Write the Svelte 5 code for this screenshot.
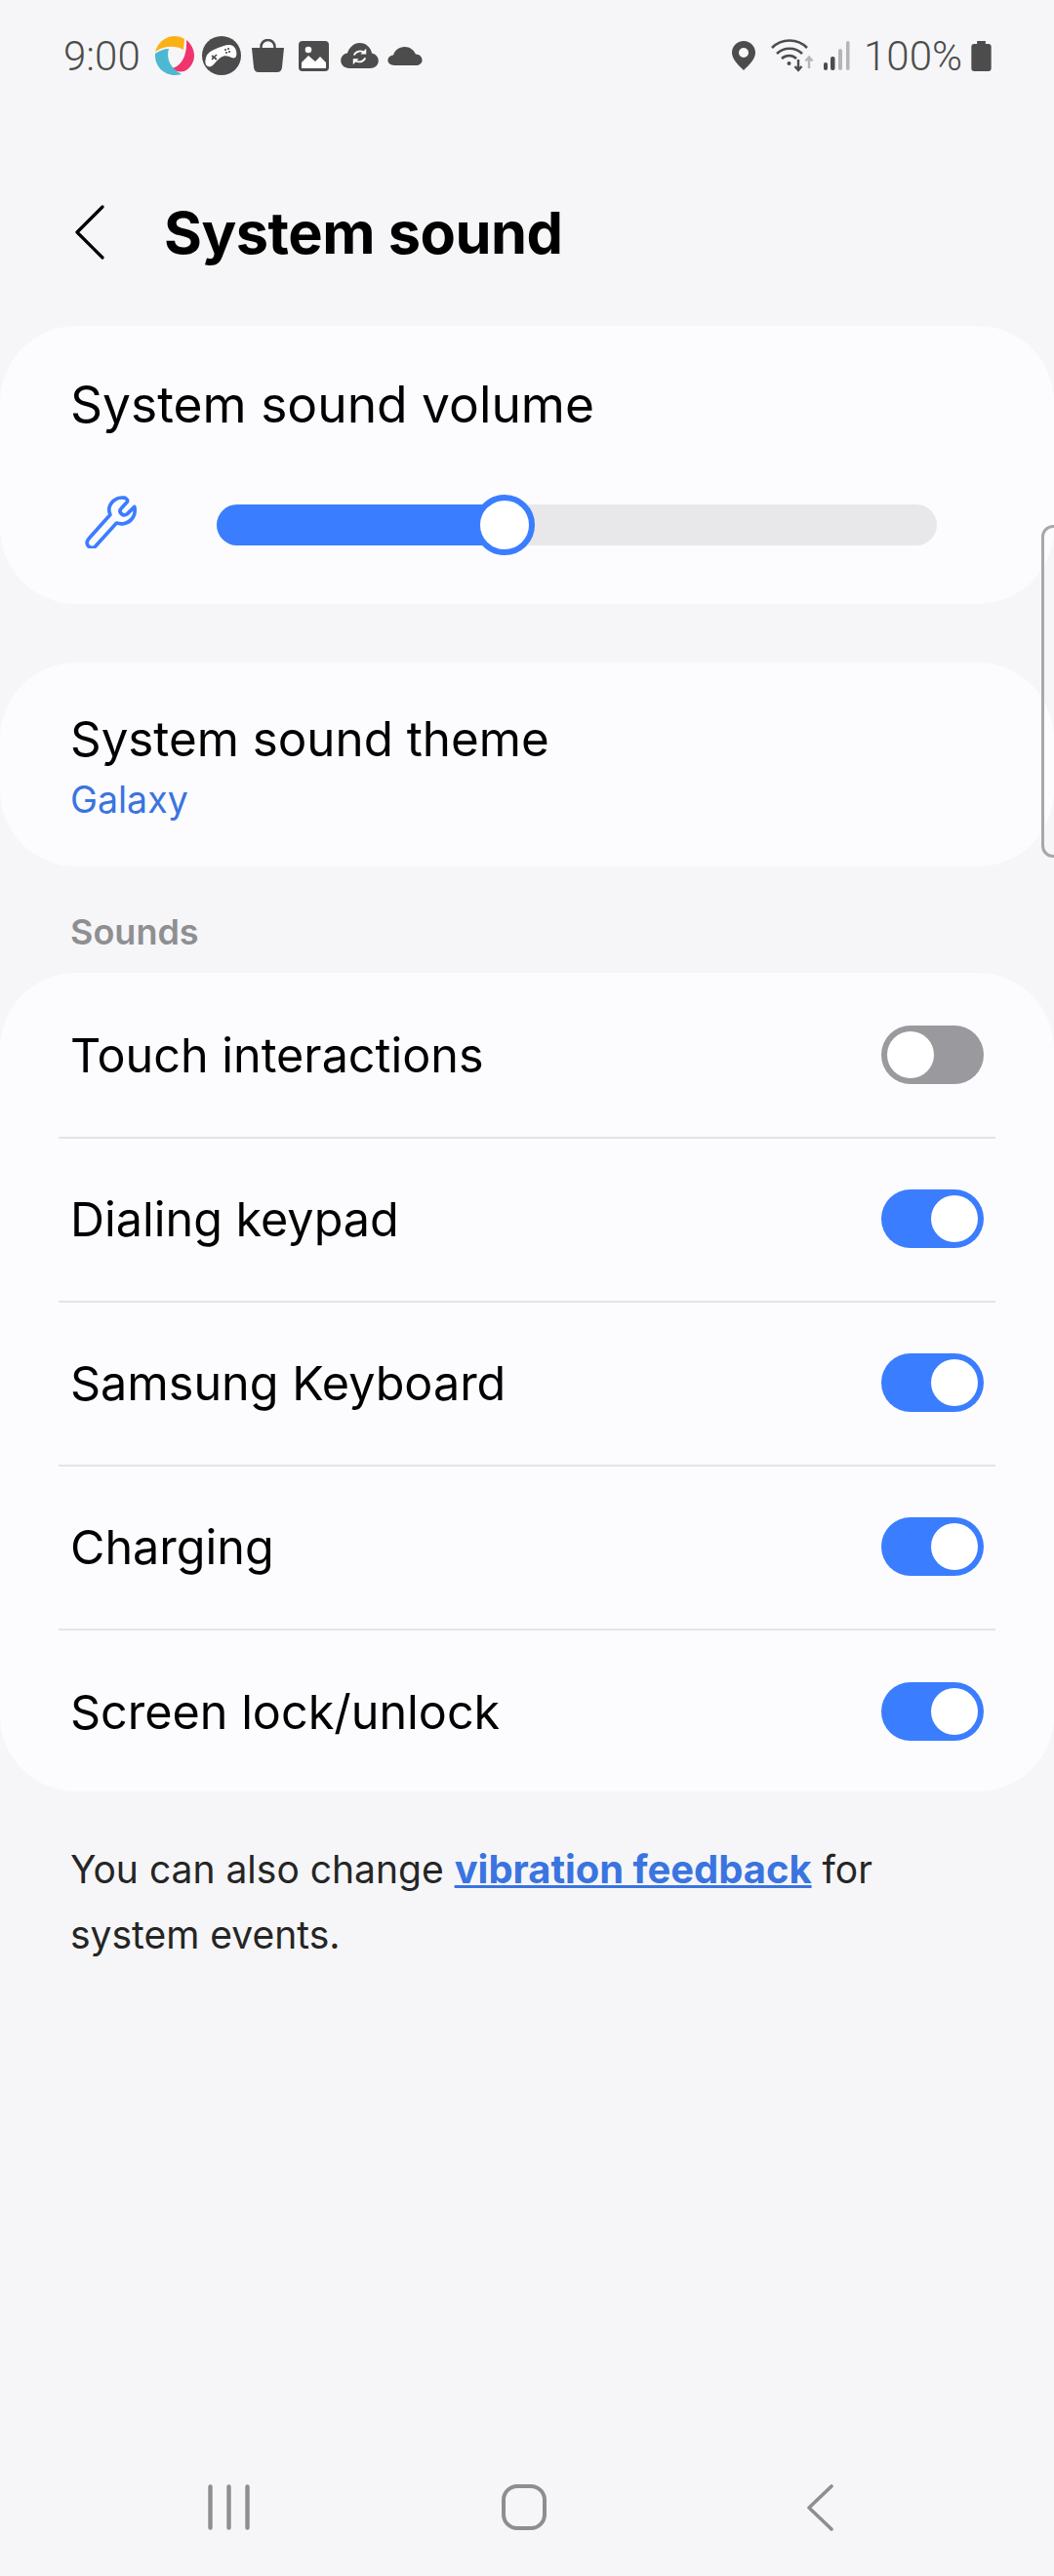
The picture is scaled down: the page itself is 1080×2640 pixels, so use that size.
<script>
  let rows = [
    { label: 'Touch interactions', on: false },
    { label: 'Dialing keypad', on: true },
    { label: 'Samsung Keyboard', on: true },
    { label: 'Charging', on: true },
    { label: 'Screen lock/unlock', on: true }
  ];
</script>

<div class="screen">
  <div class="status">
    <div class="status-left">
      <span class="clock">9:00</span>
      <svg class="app" width="40" height="40" viewBox="0 0 40 40">
        <path d="M0 16C3 6 11 0 20 0c4 0 7 1 10 3l-1 11C20 9 9 10 0 16Z" fill="#fbb116"/>
        <path d="M32 4c5 4 8 10 8 16 0 7-4 13-10 16-5 1-10 0-14-3 10-1 17-12 16-29Z" fill="#f0346e"/>
        <path d="M0 18c4-3 9-5 14-5-3 9 1 20 13 26-2 .7-5 1-7 1C9 40 0 31 0 20Z" fill="#4db8d2"/>
      </svg>
      <svg class="game" width="40" height="40" viewBox="0 0 40 40">
        <circle cx="20" cy="20" r="20" fill="#4c4c4c"/>
        <path d="M6 31c-3-1-3-5-2-9 1-4 4-6 8-8 6-3 12-5 16-5 3 0 6 2 7 6 .7 3 .5 6-1 7-2 1-4 0-6-1-3-1-6-1-9 1-3 2-5 5-7 7-2 2-4 3-6 2Z" fill="#fff"/>
        <path d="M10 20l5 4M15 19l-5 5" stroke="#4c4c4c" stroke-width="1.700"/>
        <circle cx="24" cy="14" r="1.100" fill="#4c4c4c"/><circle cx="27" cy="13" r="1.100" fill="#4c4c4c"/>
        <circle cx="25" cy="17" r="1.100" fill="#4c4c4c"/><circle cx="28" cy="16" r="1.100" fill="#4c4c4c"/>
      </svg>
      <svg class="bag" width="33" height="34" viewBox="0 0 33 34">
        <path d="M0 9h33l-2 20c-.3 3-2 5-5 5H7c-3 0-4.700-2-5-5Z" fill="#4c4c4c"/>
        <path d="M9.500 11V8c0-4 3-7 7-7s7 3 7 7v3" fill="none" stroke="#4c4c4c" stroke-width="2.500"/>
      </svg>
      <svg class="photo" width="31" height="31" viewBox="0 0 31 31">
        <rect width="31" height="31" rx="4" fill="#4c4c4c"/>
        <path d="M3 28v-6l7-7 7 6 5-5 6 6v6Z" fill="#fff"/>
        <circle cx="10" cy="9" r="3.300" fill="#fff"/>
      </svg>
      <svg class="sync" width="39" height="26" viewBox="0 0 40 27">
        <path d="M9 27C4 27 0 23.500 0 19s3-7.500 7-8C8.500 5 14 0 20 0c7 0 12 5 13 11 4 1 7 4 7 8 0 5-4 8-9 8Z" fill="#4c4c4c"/>
        <path d="M14 13a7 7 0 0 1 11.500-2M26 16a7 7 0 0 1-11.500 2" fill="none" stroke="#fff" stroke-width="1.800"/>
        <path d="M27 6v6h-6ZM13 23v-6h6Z" fill="#fff"/>
      </svg>
      <svg class="cloud" width="36" height="19" viewBox="0 0 37 20">
        <path d="M7 20c-4 0-7-2.500-7-5.500S3 9 6 9c1-5 6-9 12-9s10 3.500 12 8c4 0 7 3 7 6.500S34 20 30 20Z" fill="#4c4c4c"/>
      </svg>
    </div>
    <div class="status-right">
      <svg width="24" height="30" viewBox="0 0 24 30">
        <path fill-rule="evenodd" d="M12 0C5.400 0 0 5.200 0 11.800c0 7 6 12.500 12 18.200 6-5.700 12-11.200 12-18.200C24 5.200 18.600 0 12 0Zm0 7a5 5 0 1 1 0 10 5 5 0 0 1 0-10Z" fill="#4c4c4c"/>
      </svg>
      <svg class="wifi" width="44" height="34" viewBox="0 0 44 34">
        <path d="M1 9c10-10 26-10 36 0M6 15c7-7 19-7 26 0M11 20c4.500-4 11-4 15 0" fill="none" stroke="#4c4c4c" stroke-width="2.600"/>
        <circle cx="18.500" cy="25" r="2" fill="#4c4c4c"/>
        <path d="M28 21v10M24.500 28l3.500 4 3.500-4" fill="none" stroke="#4c4c4c" stroke-width="2.400"/>
        <path d="M39 30V19M35.500 22.500 39 18.500l3.500 4" fill="none" stroke="#b5b5b5" stroke-width="2.400"/>
      </svg>
      <svg class="signal" width="27" height="30" viewBox="0 0 27 30">
        <rect x="0" y="22" width="4" height="8" rx="2" fill="#4c4c4c"/>
        <rect x="7" y="16" width="4.500" height="14" rx="2" fill="#4c4c4c"/>
        <rect x="15" y="8" width="4" height="22" rx="2" fill="#b5b5b5"/>
        <rect x="23" y="0" width="3.500" height="30" rx="1.700" fill="#b5b5b5"/>
      </svg>
      <span class="pct">100%</span>
      <svg class="batt" width="21" height="31" viewBox="0 0 21 32">
        <path d="M6 0h9v3h3c2 0 3 1 3 3v23c0 2-1 3-3 3H3c-2 0-3-1-3-3V6c0-2 1-3 3-3h3Z" fill="#4c4c4c"/>
      </svg>
    </div>
  </div>

  <div class="header">
    <svg class="back" width="30" height="56" viewBox="0 0 30 56">
      <path d="M28 2 2 28l26 26" fill="none" stroke="#000" stroke-width="3.200" stroke-linecap="round" stroke-linejoin="round"/>
    </svg>
    <h1>System sound</h1>
  </div>

  <div class="card volume">
    <div class="row-title">System sound volume</div>
    <div class="slider-row">
      <svg class="wrench" width="54" height="54" viewBox="2 1 48 50">
        <path d="M38 3c-7-1-13 4-14 10-.4 3 .6 5 1 6L4.500 42c-2 2.500-2 5 0 7s5 2 7-.5L31 27c2 .6 4 1 7 .5 7-1.500 12-8 10-16l-7 7c-2 1.500-4 1-5.500-.5s-1.500-3.500 0-5L41 7c1-1.500 0-3.500-3-4Z" fill="none" stroke="#3b7dff" stroke-width="3.400" stroke-linejoin="round"/>
      </svg>
      <div class="track">
        <div class="fill"></div>
        <div class="thumb"></div>
      </div>
    </div>
  </div>

  <div class="card theme">
    <div class="theme-title">System sound theme</div>
    <div class="theme-value">Galaxy</div>
  </div>

  <div class="section">Sounds</div>

  <div class="card list">
    {#each rows as row, i}
      <div class="row" class:last={i === rows.length - 1}>
        <span>{row.label}</span>
        <div class="toggle" class:on={row.on}><div class="knob"></div></div>
      </div>
    {/each}
  </div>

  <p class="note">You can also change <a href="#vibration">vibration feedback</a> for system events.</p>

  <div class="spacer"></div>

  <div class="nav">
    <svg class="recents" width="43" height="47" viewBox="0 0 43 47">
      <path d="M2.500 2.500v42M21.500 2.500v42M40.500 2.500v42" stroke="#8e8e8e" stroke-width="4.400" stroke-linecap="round"/>
    </svg>
    <svg class="home" width="46" height="47" viewBox="0 0 46 47">
      <rect x="2" y="2" width="42" height="43" rx="14" fill="none" stroke="#8e8e8e" stroke-width="4"/>
    </svg>
    <svg class="prev" width="27" height="48" viewBox="0 0 27 48">
      <path d="M25 2 2 24l23 22" fill="none" stroke="#8e8e8e" stroke-width="3.600" stroke-linecap="round" stroke-linejoin="round"/>
    </svg>
  </div>

  <div class="edge"></div>
</div>

<style>
  :global(body) {
    margin: 0;
    background: #f6f6f8;
  }

  .screen {
    position: relative;
    width: 1080px;
    height: 2640px;
    background: #f6f6f8;
    display: flex;
    flex-direction: column;
    font-family: Inter, "Liberation Sans", sans-serif;
    color: #000;
    overflow: hidden;
  }

  .status {
    height: 114px;
    box-sizing: border-box;
    padding: 0 64px 0 65px;
    display: flex;
    align-items: center;
    justify-content: space-between;
    color: #4c4c4c;
  }

  .status-left, .status-right {
    display: flex;
    align-items: center;
  }

  .status-right { gap: 10px; }

  .clock, .pct {
    font-family: Roboto, sans-serif;
    font-size: 42px;
    font-weight: 300;
  }

  .app { margin-left: 15px; }
  .game { margin-left: 8px; }
  .bag { margin-left: 11px; }
  .photo { margin-left: 15px; }
  .sync { margin-left: 12px; }
  .cloud { margin-left: 9px; }

  .wifi { margin-left: 6px; }
  .pct { margin-left: 4px; }
  .batt { margin-left: -1px; }

  .header {
    height: 123px;
    margin-top: 62px;
    padding-left: 77px;
    display: flex;
    align-items: center;
    gap: 61px;
  }

  h1 {
    margin: 0;
    font-size: 59.500px;
    font-weight: 700;
    letter-spacing: -0.5px;
  }

  .card {
    background: #fcfcfe;
    border-radius: 78px;
  }

  .volume {
    margin-top: 35px;
    height: 285px;
    box-sizing: border-box;
    padding: 50px 72px 0;
  }

  .row-title {
    font-size: 51.500px;
    line-height: 60px;
  }

  .slider-row {
    display: flex;
    align-items: center;
    margin-top: 70px;
    margin-right: 48px;
  }

  .wrench {
    margin-left: 15px;
    margin-right: 81px;
    margin-top: -6px;
  }

  .track {
    position: relative;
    flex: 1;
    height: 42px;
    border-radius: 21px;
    background: #e8e8ea;
  }

  .fill {
    width: 300px;
    height: 100%;
    background: #3b7dff;
    border-radius: 21px 0 0 21px;
  }

  .thumb {
    position: absolute;
    left: 264px;
    top: -10px;
    width: 50px;
    height: 50px;
    border: 6px solid #3b7dff;
    border-radius: 50%;
    background: #fff;
  }

  .theme {
    margin-top: 60px;
    height: 209px;
    box-sizing: border-box;
    padding: 48px 72px 0;
  }

  .theme-title {
    font-size: 49.300px;
    line-height: 60px;
  }

  .theme-value {
    font-size: 37.500px;
    line-height: 50px;
    margin-top: 8px;
    color: #3a74e0;
  }

  .section {
    margin: 44px 72px 0;
    height: 65px;
    font-size: 36px;
    line-height: 46px;
    font-weight: 600;
    color: #8f8f92;
  }

  .list {
    height: 839px;
    padding: 2px 60px 0;
    box-sizing: border-box;
  }

  .row {
    height: 168px;
    box-sizing: border-box;
    border-bottom: 2px solid #e4e4e6;
    display: flex;
    align-items: center;
    justify-content: space-between;
    padding: 0 12px 2px;
    font-size: 48.500px;
  }

  .row.last { border-bottom: none; }

  .toggle {
    width: 105px;
    height: 60px;
    border-radius: 30px;
    background: #9a9a9e;
    box-sizing: border-box;
    padding: 6px;
    display: flex;
  }

  .toggle.on {
    background: #3b7dff;
    justify-content: flex-end;
  }

  .knob {
    width: 48px;
    height: 48px;
    border-radius: 50%;
    background: #fff;
  }

  .note {
    margin: 46px 72px 0;
    font-size: 39px;
    line-height: 67px;
    color: #252525;
  }

  .note a {
    color: #3a74e0;
    font-size: 39.900px;
    font-weight: 700;
    text-decoration: underline;
  }

  .spacer { flex: 1; }

  .nav {
    display: flex;
    align-items: center;
    height: 47px;
    padding-left: 213px;
    margin-bottom: 47px;
  }

  .home { margin-left: 258px; }
  .prev { margin-left: 267px; }

  .edge {
    position: absolute;
    left: 1067px;
    top: 538px;
    width: 30px;
    height: 341px;
    box-sizing: border-box;
    border: 3px solid #a8a8aa;
    border-radius: 12px;
  }
</style>
